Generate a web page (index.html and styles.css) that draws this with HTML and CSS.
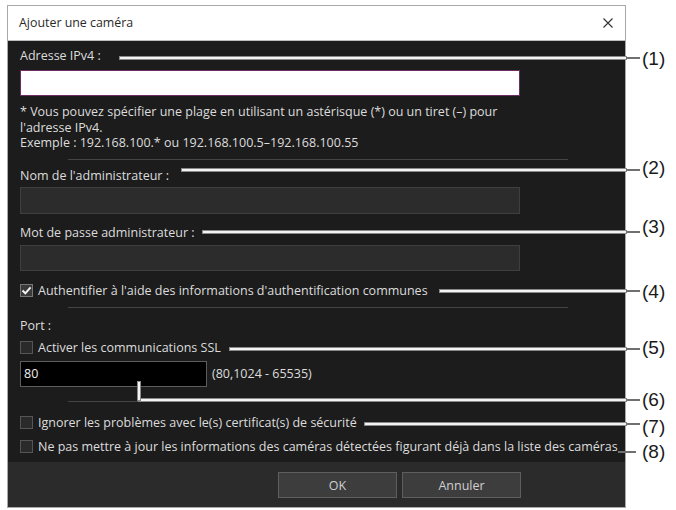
FILE: index.html
```html
<!DOCTYPE html>
<html lang="fr">
<head>
<meta charset="utf-8">
<title>Ajouter une caméra</title>
<link rel="stylesheet" href="styles.css">
</head>
<body>
<div class="page">
  <div class="dialog">
    <div class="titlebar">
      <span class="title">Ajouter une caméra</span>
      <svg class="close" width="10" height="10" viewBox="0 0 10 10"><path d="M0.5 0.5L9.5 9.5M9.5 0.5L0.5 9.5" stroke="#333" stroke-width="1.1" fill="none"/></svg>
    </div>
    <div class="body">
      <div class="label l1">Adresse IPv4 :</div>
      <div class="input ip"></div>
      <div class="hint">* Vous pouvez spécifier une plage en utilisant un astérisque (*) ou un tiret (–) pour<br>l'adresse IPv4.<br>Exemple : 192.168.100.* ou 192.168.100.5–192.168.100.55</div>
      <div class="sep s1"></div>
      <div class="label l2">Nom de l'administrateur :</div>
      <div class="input dark i2"></div>
      <div class="label l3">Mot de passe administrateur :</div>
      <div class="input dark i3"></div>
      <div class="check c1"><span class="box checked"><svg width="11" height="11" viewBox="0 0 11 11"><path d="M1.5 5.5L4.3 8.3L9.6 2.3" stroke="#f2f2f2" stroke-width="2" fill="none"/></svg></span>Authentifier à l'aide des informations d'authentification communes</div>
      <div class="sep s2"></div>
      <div class="label port">Port :</div>
      <div class="check c2"><span class="box"></span>Activer les communications SSL</div>
      <div class="portrow">
        <div class="input black">80</div>
        <span class="range">(80,1024 - 65535)</span>
      </div>
      <div class="sep s3"></div>
      <div class="check c3"><span class="box"></span>Ignorer les problèmes avec le(s) certificat(s) de sécurité</div>
      <div class="check c4"><span class="box"></span>Ne pas mettre à jour les informations des caméras détectées figurant déjà dans la liste des caméras</div>
    </div>
    <div class="footer">
      <button class="btn">OK</button>
      <button class="btn">Annuler</button>
    </div>
  </div>

  <div class="callout k1"><span class="in"></span><span class="out"></span></div>
  <div class="callout k2"><span class="in"></span><span class="out"></span></div>
  <div class="callout k3"><span class="in"></span><span class="out"></span></div>
  <div class="callout k4"><span class="in"></span><span class="out"></span></div>
  <div class="callout k5"><span class="in"></span><span class="out"></span></div>
  <div class="callout k6"><span class="in"></span><span class="out"></span></div>
  <div class="vline"></div>
  <div class="callout k7"><span class="in"></span><span class="out"></span></div>
  <div class="callout k8"><span class="out"></span></div>

  <span class="num n1">(1)</span>
  <span class="num n2">(2)</span>
  <span class="num n3">(3)</span>
  <span class="num n4">(4)</span>
  <span class="num n5">(5)</span>
  <span class="num n6">(6)</span>
  <span class="num n7">(7)</span>
  <span class="num n8">(8)</span>
</div>
</body>
</html>
```
FILE: styles.css
```css
* { box-sizing: border-box; }
html, body { margin: 0; padding: 0; background: #fff; }
body { font-family: "Open Sans", "Noto Sans", sans-serif; }

.page { position: relative; width: 676px; height: 510px; overflow: hidden; padding: 5px 0 0 7px; }

.dialog {
  width: 619px;
  height: 503px;
  border: 1px solid #a8a8a8;
  display: flex;
  flex-direction: column;
  background: #1c1c1c;
}

.titlebar {
  height: 35px;
  background: #fff;
  display: flex;
  align-items: center;
  justify-content: space-between;
  padding: 0 10px 1px 11px;
  border-bottom: 1px solid #bdbdbd;
  flex: none;
}
.title { font-size: 12.4px; color: #2a2a2a; }
.close { margin-right: 2px; }

.body {
  flex: 1;
  padding: 0 12px;
  color: #dcdcdc;
  font-size: 12.5px;
}

.label { height: 18px; line-height: 18px; }
.l1 { margin-top: 6px; }
.l2 { margin-top: 7px; }
.l3 { margin-top: 10px; }
.port { margin-top: 9px; }

.input { height: 26px; width: 500px; border: 1px solid #444; }
.ip { margin-top: 5px; background: #fff; border-color: #6d2d62; }
.dark { background: #2c2c2c; border-color: #3f3f3f; }
.i2 { margin-top: 2px; height: 27px; }
.i3 { margin-top: 3px; }

.hint { margin-top: 8px; line-height: 15.5px; }

.sep { height: 1px; width: 500px; margin-left: 48px; background: #444; }
.s1 { margin-top: 8px; }
.s2 { margin-top: 7px; }
.s3 { margin-top: 14px; }

.check { display: flex; align-items: center; height: 18px; line-height: 18px; white-space: nowrap; }
.c1 { margin-top: 11px; }
.c2 { margin-top: 4px; }
.c3 { margin-top: 12px; }
.c4 { margin-top: 6px; }

.box {
  width: 13px; height: 13px;
  border: 1px solid #555;
  background: #2a2a2a;
  margin-right: 5px;
  display: inline-flex;
  align-items: center;
  justify-content: center;
  flex: none;
}
.box.checked { background: #3a3a3a; border-color: #777; }

.portrow { display: flex; align-items: center; margin-top: 4px; }
.black { width: 187px; background: #000; border-color: #5c5c5c; color: #eee; padding-left: 3px; line-height: 24px; }
.range { margin-left: 5px; }

.footer {
  height: 45px;
  background: #2b2b2b;
  display: flex;
  justify-content: flex-end;
  align-items: flex-start;
  gap: 5px;
  padding: 10px 104px 0 0;
  flex: none;
}
.btn {
  width: 119px; height: 26px;
  background: #3d3d3d;
  border: 1px solid #5e5e5e;
  color: #cfcfcf;
  font-family: "Open Sans", "Noto Sans", sans-serif;
  font-size: 12.5px;
  padding: 0;
}

/* callouts */
.callout { position: absolute; display: flex; align-items: center; height: 4px; }
.callout .in { flex: 1; height: 2px; background: #f4f4f4; box-shadow: 0 0 0 1px #8a8a8a; }
.callout .out { width: 14px; height: 2px; background: #707070; }
.k1 { left: 120px; top: 56px; width: 520px; }
.k2 { left: 182px; top: 168px; width: 458px; }
.k3 { left: 203px; top: 230px; width: 437px; }
.k4 { left: 440px; top: 289px; width: 200px; }
.k5 { left: 230px; top: 347px; width: 410px; }
.k6 { left: 139px; top: 398px; width: 501px; }
.k7 { left: 365px; top: 422px; width: 275px; }
.k8 { left: 618px; top: 450px; width: 18px; }
.k8 .out { width: 18px; }
.vline { position: absolute; left: 138px; top: 382px; width: 2px; height: 18px; background: #f4f4f4; box-shadow: 0 0 0 1px #8a8a8a; }

.num {
  position: absolute;
  left: 642px;
  font-family: "Liberation Sans", Arial, sans-serif;
  font-size: 19px;
  line-height: 22px;
  color: #1a1a1a;
}
.n1 { top: 48px; }
.n2 { top: 157px; }
.n3 { top: 216px; }
.n4 { top: 281px; }
.n5 { top: 337px; }
.n6 { top: 389px; }
.n7 { top: 416px; }
.n8 { top: 441px; }
```
